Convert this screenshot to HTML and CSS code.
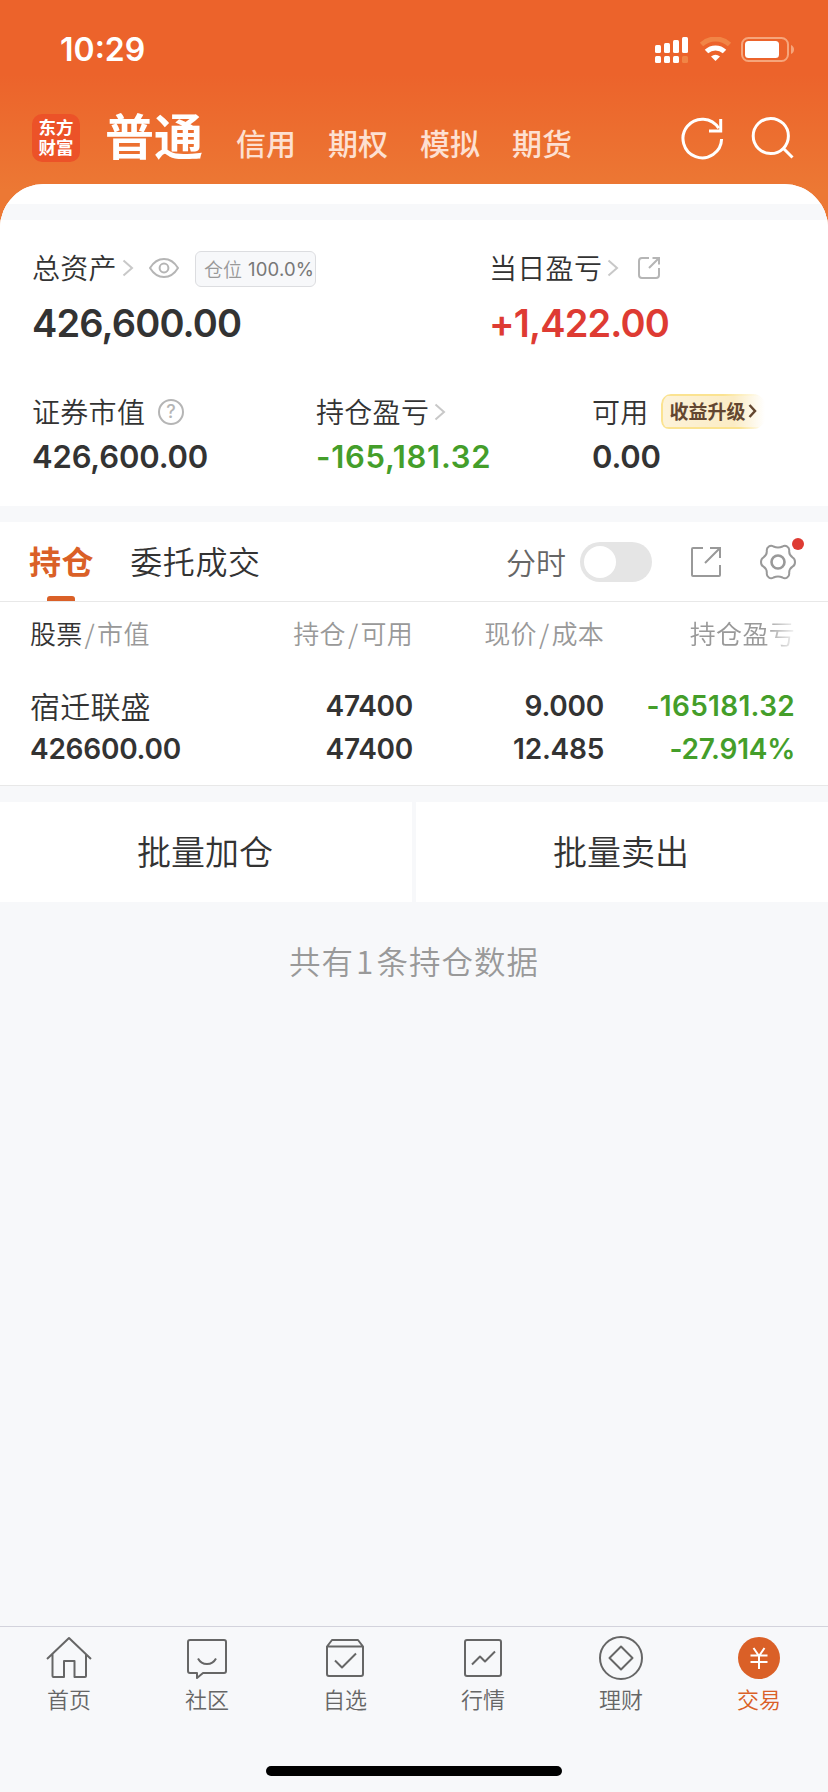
FILE: index.html
```html
<!DOCTYPE html>
<html lang="zh-CN">
<head>
<meta charset="utf-8">
<title>普通交易</title>
<link rel="stylesheet" href="styles.css">
</head>
<body>
<div class="app">
  <header class="header">
    <div class="status">
      <span class="time">10:29</span>
      <svg class="status-icons" viewBox="655 37 140 26" width="140" height="26" fill="#fff">
        <rect x="655" y="45" width="6" height="8" rx="1.5"/><rect x="664" y="43" width="6" height="10" rx="1.5"/><rect x="673" y="40" width="6" height="13" rx="1.5"/><rect x="682" y="37" width="6" height="16" rx="1.5"/>
        <rect x="655" y="56" width="6" height="7" rx="1.5"/><rect x="664" y="56" width="6" height="7" rx="1.5"/><rect x="673" y="56" width="6" height="7" rx="1.5"/><rect x="682" y="56" width="6" height="7" rx="1.5" fill="#f18546"/>
        <path d="M701.5 44.5A20.5 20.5 0 0 1 729.500 44.500" fill="none" stroke="#f18546" stroke-width="5"/>
        <path d="M706.500 51.500A13 13 0 0 1 724.500 51.500" fill="none" stroke="#fff" stroke-width="5"/>
        <path d="M711 56.500Q715.500 53 720 56.500L715.500 61Z"/>
        <rect x="742" y="38" width="46" height="23" rx="6.500" fill="none" stroke="#f6a57b" stroke-width="2"/>
        <rect x="745" y="41" width="34" height="17" rx="3.500"/>
        <path d="M791 45q3 1.500 3 4.500t-3 4.500z" fill="#f6a57b"/>
      </svg>
    </div>
    <div class="topbar">
      <div class="logo">东方<br>财富</div>
      <nav class="accounts">
        <span class="account-active">普通</span>
        <span>信用</span><span>期权</span><span>模拟</span><span>期货</span>
      </nav>
      <svg class="actions" viewBox="680 114 116 48" width="116" height="48" fill="none" stroke="#fff" stroke-width="3">
        <path d="M721.600 139A19.300 19.300 0 1 1 718.700 128.300"/><path d="M720.700 119V131H709"/>
        <circle cx="770.800" cy="136" r="17.600"/><path d="M783.500 148.500L792.500 157.500"/>
      </svg>
    </div>
  </header>

  <main class="sheet">
    <div class="sheet-gap"></div>
    <section class="summary">
      <div class="row-top">
        <div class="cell">
          <div class="label"><span>总资产</span>
            <svg class="chev" viewBox="0 0 12 18" width="12" height="18"><path d="M1.500 1.500L10 9L1.500 16.500"/></svg>
            <svg class="eye" viewBox="0 0 30 20" width="30" height="20" fill="none" stroke="#b5b5b5" stroke-width="2"><path d="M1 10Q6.500 1 15 1T29 10Q23.500 19 15 19T1 10Z"/><circle cx="15" cy="10" r="4.400"/></svg>
            <span class="ratio"><span>仓位</span><b>100.0%</b></span>
          </div>
          <div class="total">426,600.00</div>
        </div>
        <div class="cell">
          <div class="label"><span>当日盈亏</span>
            <svg class="chev" viewBox="0 0 12 18" width="12" height="18"><path d="M1.500 1.500L10 9L1.500 16.500"/></svg>
            <svg class="share-sm" viewBox="0 0 24 24" width="24" height="24" fill="none" stroke="#b5b5b5" stroke-width="2"><path d="M12 2H5Q2 2 2 5V19Q2 22 5 22H19Q22 22 22 19V12M15.500 2H22V8.500M22 2L12 12"/></svg>
          </div>
          <div class="total total-up">+1,422.00</div>
        </div>
      </div>
      <div class="row-bottom">
        <div class="cell">
          <div class="label"><span>证券市值</span><span class="help">?</span></div>
          <div class="value">426,600.00</div>
        </div>
        <div class="cell">
          <div class="label"><span>持仓盈亏</span>
            <svg class="chev" viewBox="0 0 12 18" width="12" height="18"><path d="M1.500 1.500L10 9L1.500 16.500"/></svg>
          </div>
          <div class="value down value-pl">-165,181.32</div>
        </div>
        <div class="cell">
          <div class="label"><span>可用</span>
            <span class="promo"><span>收益升级</span><svg viewBox="0 0 9 14" width="9" height="14" fill="none" stroke="#634630" stroke-width="2.500"><path d="M1.500 1L7 7L1.500 13"/></svg></span>
          </div>
          <div class="value value-free">0.00</div>
        </div>
      </div>
    </section>

    <section class="positions">
      <div class="tabs">
        <span class="tab tab-active">持仓</span>
        <span class="tab">委托成交</span>
        <span class="minute">分时</span>
        <span class="toggle"><i></i></span>
        <svg class="share" viewBox="0 0 32 32" width="32" height="32" fill="none" stroke="#999" stroke-width="2"><path d="M13 2H3Q2 2 2 3V29Q2 30 3 30H29Q30 30 30 29V19M20 2H30V12M30 2L15 17"/></svg>
        <span class="gear"><svg viewBox="-19 -19 38 38" width="38" height="38" fill="none" stroke="#999" stroke-width="2" stroke-linejoin="round"><path d="M-4.500 -15.500Q0 -13.500 4.500 -15.500Q7 -17.200 9.500 -15.200Q11.500 -14 11.200 -11Q11 -7 14.500 -4.700Q17 -3.500 17 0Q17 3.500 14.500 4.700Q11 7 11.200 11Q11.500 14 9.500 15.200Q7 17.200 4.500 15.500Q0 13.500 -4.500 15.500Q-7 17.200 -9.500 15.200Q-11.500 14 -11.200 11Q-11 7 -14.500 4.700Q-17 3.500 -17 0Q-17 -3.500 -14.500 -4.700Q-11 -7 -11.200 -11Q-11.500 -14 -9.500 -15.200Q-7 -17.200 -4.500 -15.500Z"/><circle r="6.500" stroke-width="2.600"/></svg><i class="dot"></i></span>
      </div>
      <div class="grid grid-head">
        <span><em>股票</em><s>/</s>市值</span><span>持仓<s>/</s>可用</span><span>现价<s>/</s>成本</span><span class="fade">持仓盈亏</span>
      </div>
      <div class="grid grid-row">
        <span class="stock">宿迁联盛</span><span>47400</span><span>9.000</span><span class="down wide">-165181.32</span>
        <span>426600.00</span><span>47400</span><span>12.485</span><span class="down">-27.914%</span>
      </div>
    </section>

    <div class="batch"><span>批量加仓</span><span>批量卖出</span></div>
    <p class="count">共有<b>1</b>条持仓数据</p>
  </main>

  <footer class="footer">
    <nav class="nav">
      <span class="nav-item"><svg viewBox="-23 -22 46 44" width="46" height="44"><path d="M-22 1L0 -20L22 1M-16.500 -4V18Q-16.500 19 -15.500 19H-5V3H5.500V19H16Q17 19 17 18V-4"/></svg>首页</span>
      <span class="nav-item"><svg viewBox="-23 -22 46 44" width="46" height="44"><path d="M-17 -18H17Q19 -18 19 -16V13Q19 15 17 15H-4L-10 20V15H-17Q-19 15 -19 13V-16Q-19 -18 -17 -18ZM-9 .5Q-6 6 0 6T9 .5"/></svg>社区</span>
      <span class="nav-item"><svg viewBox="-23 -22 46 44" width="46" height="44"><path d="M-18 -11.500L-13 -18H13L18 -11.500V16Q18 18 16 18H-16Q-18 18 -18 16ZM-18 -11.500H18M-10 2.500L-3 9.500L11 -4.500"/></svg>自选</span>
      <span class="nav-item"><svg viewBox="-23 -22 46 44" width="46" height="44"><rect x="-18" y="-18" width="36" height="36" rx="2"/><path d="M-11 6.500L-3 -1.500L2 3.500L12 -6.500"/></svg>行情</span>
      <span class="nav-item"><svg viewBox="-23 -22 46 44" width="46" height="44"><circle r="21"/><path d="M0 -11.500L11.500 0L0 11.500L-11.500 0Z"/></svg>理财</span>
      <span class="nav-item nav-active"><svg viewBox="-23 -22 46 44" width="46" height="44"><circle r="21" fill="#da6027" stroke="none"/><path d="M-5.500 -10L0 -2L5.500 -10M0 -2V11M-8.500 -2.500H8.500M-8.500 4H8.500" stroke="#fff"/></svg>交易</span>
    </nav>
    <div class="home-bar"></div>
  </footer>
</div>
</body>
</html>
```
FILE: styles.css
```css
* { box-sizing: border-box; }
body { margin: 0; background: #f7f8fa; }
svg { display: block; flex: none; }
i, em, s, b { font-style: normal; text-decoration: none; font-weight: inherit; }
.app {
  width: 828px; height: 1792px; display: flex; flex-direction: column;
  font-family: "Noto Sans CJK SC", sans-serif; font-weight: 350; color: #333;
  background: linear-gradient(#ec632b 0, #ec632b 74px, #ec7834 190px, #ec7834 240px, #f7f8fa 240px);
  white-space: nowrap; overflow: hidden;
}
.header { height: 184px; flex: none; color: #fff; }
.status { height: 98px; padding: 0 33px 0 60px; display: flex; justify-content: space-between; align-items: center; }
.time { font: 600 32px/40px Inter, sans-serif; padding-top: 2px; }
.status-icons { margin-top: 2px; }
.topbar { height: 80px; padding: 0 32px; display: flex; align-items: center; }
.logo {
  width: 48px; height: 48px; padding-top: 3px; border-radius: 10px; background: #ec5228;
  text-align: center; font-size: 17.500px; line-height: 20px; font-weight: 700;
}
.accounts { display: flex; align-items: baseline; gap: 32px; margin-left: 25px; flex: 1; font-size: 30px; line-height: 48px; font-weight: 500; color: #fde0d2; }
.account-active { font-size: 49px; font-weight: 600; margin-right: 1px; color: #fff; }

.sheet { flex: 1; border-radius: 44px 44px 0 0; background: #f7f8fa; overflow: hidden; padding-top: 20px; box-shadow: inset 0 20px #fff; }
.sheet-gap { height: 16px; background: #f7f8fa; }
.summary { height: 286px; background: #fff; padding: 28px 32px 0; }
.row-top { display: grid; grid-template-columns: 457px 1fr; height: 144px; }
.row-bottom { display: grid; grid-template-columns: 284px 276px 1fr; }
.label { height: 40px; display: flex; align-items: center; font-size: 28px; line-height: 40px; letter-spacing: .3px; }
.label > span:first-child { margin-top: -2px; }
.chev { margin-left: 5px; fill: none; stroke: #c8c8c8; stroke-width: 2; }
.eye { margin-left: 15px; }
.ratio {
  width: 121px; height: 36px; margin: 2px 0 0 16px; padding-left: 8px; display: flex; align-items: center; gap: 6px;
  border: 1px solid #dcdde0; border-radius: 6px; background: #f7f8fa; color: #999; font-size: 19px; overflow: hidden; letter-spacing: 0;
}
.ratio b { font: 400 18.500px/34px Inter, sans-serif; letter-spacing: .2px; color: #777; }
.share-sm { margin-left: 18px; }
.total { margin-top: 11px; font: 600 38px/48px Inter, sans-serif; letter-spacing: -.85px; }
.total-up { color: #de3b33; }
.help { width: 26px; height: 26px; margin-left: 13px; border: 2px solid #b5b5b5; border-radius: 50%; font: 500 18px/22px Inter, sans-serif; color: #b5b5b5; text-align: center; }
.value { margin-top: 5px; font: 600 31px/40px Inter, sans-serif; letter-spacing: -.15px; }
.value-pl { letter-spacing: .7px; }
.down { color: #449e2a; }
.promo {
  width: 104px; height: 35px; margin: -2px 0 0 12px; padding-left: 9px; display: flex; align-items: center; gap: 2px;
  border-radius: 10px 12px 12px 8px; box-shadow: inset 2px 0 #fbe391;
  background:
    linear-gradient(90deg, #fbe391 60%, #fff) top / 100% 2px no-repeat,
    linear-gradient(90deg, #fbe391 75%, #fff) bottom / 100% 2px no-repeat,
    linear-gradient(90deg, #fdf3da, #fbecc4 70%, #fff);
  color: #634630; font-size: 19px; font-weight: 700; letter-spacing: 0;
}

.positions { margin-top: 16px; height: 264px; background: #fff; border-bottom: 1px solid #e8e8e8; }
.tabs { height: 80px; padding: 0 31px 0 29px; display: flex; align-items: center; border-bottom: 1px solid #e8e8e8; }
.tab { font-size: 32px; letter-spacing: .6px; line-height: 77px; padding-bottom: 2px; margin-right: 36px; }
.tab-active { color: #da6027; font-weight: 600; position: relative; }
.tab-active::after { content: ""; position: absolute; left: 18px; bottom: 0; width: 28px; height: 5px; border-radius: 3px 3px 0 0; background: #da6027; }
.minute { margin-left: auto; font-size: 30px; color: #666; padding-bottom: 1px; }
.toggle { width: 72px; height: 40px; margin-left: 14px; padding: 4px; border-radius: 20px; background: #e5e5e5; }
.toggle i { display: block; width: 32px; height: 32px; border-radius: 50%; background: #fff; }
.share { margin-left: 38px; }
.gear { margin-left: 37px; position: relative; }
.dot { position: absolute; right: -7px; top: -5px; width: 12px; height: 12px; border-radius: 50%; background: #de3b33; }
.grid { display: grid; grid-template-columns: 200px 183px 191px 191px; padding-left: 30px; }
.grid > :not(:nth-child(4n+1)) { text-align: right; }
.grid-head { padding-top: 11px; font-size: 26px; line-height: 40px; letter-spacing: .3px; color: #999; }
.grid-head em { color: #333; }
.grid-head s { margin: 0 2px; }
.fade { -webkit-mask-image: linear-gradient(90deg, #000 160px, transparent 195px); mask-image: linear-gradient(90deg, #000 160px, transparent 195px); }
.grid-row { padding-top: 32px; font: 600 28px/43px Inter, sans-serif; letter-spacing: -.25px; }
.grid-row .wide { letter-spacing: .3px; }
.grid-row .stock { font: 350 30px/40px "Noto Sans CJK SC", sans-serif; letter-spacing: .2px; }

.batch { margin-top: 16px; height: 100px; display: grid; grid-template-columns: 1fr 1fr; gap: 4px; text-align: center; font-size: 34px; line-height: 97px; }
.batch span { background: #fff; padding-right: 2px; }
.count { margin: 34px 0 0; text-align: center; font-size: 31.500px; line-height: 48px; letter-spacing: 1px; color: #999; }
.count b { margin: 0 2px; }

.footer { height: 166px; flex: none; background: #f7f8fa; border-top: 1px solid #d3d3dc; }
.nav { height: 139px; padding-top: 9px; display: grid; grid-template-columns: repeat(6, 1fr); }
.nav-item { display: flex; flex-direction: column; align-items: center; font-size: 22px; line-height: 37px; color: #666; }
.nav-item svg { fill: none; stroke: #666; stroke-width: 2; stroke-linejoin: round; }
.nav-active { color: #da6027; }
.home-bar { width: 296px; height: 10px; margin: 0 auto; border-radius: 5px; background: #000; }
```
